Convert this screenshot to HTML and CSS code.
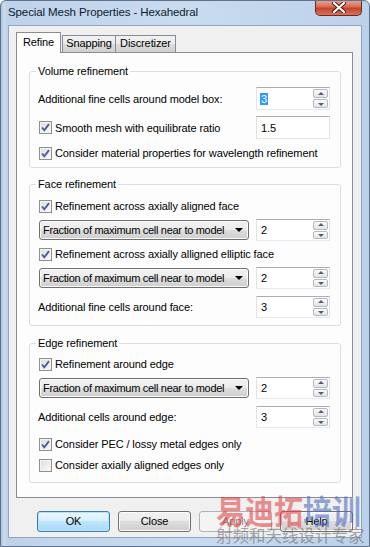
FILE: index.html
```html
<!doctype html>
<html>
  <head>
    <meta charset=utf-8>
    <title>Special Mesh Properties - Hexahedral</title>
    <link rel="stylesheet" href="styles.css">
  </head>
  <body>
    <div class=window>
      <div class=titlebar>
        <span class=title>Special Mesh Properties - Hexahedral</span>
        <div class=close>
          <svg width=14 height=11 viewBox="0 0 14 11"><path d="M2 1 L12 10 M12 1 L2 10" stroke="#4a1a12" stroke-width=4 stroke-linecap=round /><path d="M2 1 L12 10 M12 1 L2 10" stroke="#fff" stroke-width=2.2 stroke-linecap=round /></svg>
        </div>
      </div>

      <div class=client>
        <div class=tabs>
          <div class="tab active">Refine</div>
          <div class="tab snap">Snapping</div>
          <div class="tab disc">Discretizer</div>
        </div>

        <div class=panel>
          <fieldset class="group vol">
            <legend>Volume refinement</legend>
            <div class="row r23">
              <span class=label>Additional fine cells around model box:</span>
              <div class=spin><span class=sel>3</span><div class=arrows><i class=up></i><i class=down></i></div></div>
            </div>
            <div class="row r23 m6">
              <span class="check on"></span><span class=label>Smooth mesh with equilibrate ratio</span>
              <div class=spin>1.5</div>
            </div>
            <div class="row r18 m5">
              <span class="check on"></span><span class=label>Consider material properties for wavelength refinement</span>
            </div>
          </fieldset>

          <fieldset class="group face">
            <legend>Face refinement</legend>
            <div class="row r16">
              <span class="check on"></span><span class=label>Refinement across axially aligned face</span>
            </div>
            <div class="row r22 m5">
              <div class=combo>Fraction of maximum cell near to model<i class=caret></i></div>
              <div class=spin>2<div class=arrows><i class=up></i><i class=down></i></div></div>
            </div>
            <div class="row r16 m5">
              <span class="check on"></span><span class=label>Refinement across axially alligned elliptic face</span>
            </div>
            <div class="row r22 m5">
              <div class=combo>Fraction of maximum cell near to model<i class=caret></i></div>
              <div class=spin>2<div class=arrows><i class=up></i><i class=down></i></div></div>
            </div>
            <div class="row r22 m7">
              <span class=label>Additional fine cells around face:</span>
              <div class=spin>3<div class=arrows><i class=up></i><i class=down></i></div></div>
            </div>
          </fieldset>

          <fieldset class="group edge">
            <legend>Edge refinement</legend>
            <div class="row r16">
              <span class="check on"></span><span class=label>Refinement around edge</span>
            </div>
            <div class="row r22 m5">
              <div class=combo>Fraction of maximum cell near to model<i class=caret></i></div>
              <div class=spin>2<div class=arrows><i class=up></i><i class=down></i></div></div>
            </div>
            <div class="row r22 m7">
              <span class=label>Additional cells around edge:</span>
              <div class=spin>3<div class=arrows><i class=up></i><i class=down></i></div></div>
            </div>
            <div class="row r16 m8">
              <span class="check on"></span><span class=label>Consider PEC / lossy metal edges only</span>
            </div>
            <div class="row r16 m5">
              <span class=check></span><span class=label>Consider axially aligned edges only</span>
            </div>
          </fieldset>
        </div>

        <div class=buttons>
          <div class="btn default">OK</div>
          <div class=btn>Close</div>
          <div class="btn disabled">Apply</div>
          <div class=btn>Help</div>
        </div>
      </div>

      <div class=watermark>
        <div class=wm-big><span class=wm-red>易迪拓</span><span class=wm-blue>培训</span></div>
        <div class=wm-small>射频和天线设计专家</div>
      </div>
    </div>
  </body>
</html>
```

FILE: styles.css
```css
* { box-sizing: border-box }

body {
  margin: 0;
  font-family: 'Liberation Sans', Arial, sans-serif;
  font-size: 11px;
  letter-spacing: -0.1px;
  color: #000;
}

.window {
  position: relative;
  width: 370px;
  height: 547px;
  display: flex;
  flex-direction: column;
  padding: 0 7px 8px;
  border: 1px solid #5f728c;
  border-radius: 6px 6px 0 0;
  overflow: hidden;
  background:
    linear-gradient(90deg, #aac2df 0, #cddcef 3px, #bed2ea 6px, #c9dbef 50%, #bcd1ea 100%);
}

.titlebar {
  height: 24px;
  display: flex;
  justify-content: space-between;
  align-items: flex-start;
}
.title {
  margin: 5px 0 0 0;
  font-size: 11.5px;
  color: #0b1a2e;
}
.close {
  width: 47px;
  height: 16px;
  margin-top: -1px;
  border: 1px solid #6a2a20;
  border-top: none;
  border-radius: 0 0 5px 5px;
  background: linear-gradient(#e9a99a, #d56c55 45%, #c4442c 55%, #d9725a);
  display: flex;
  align-items: center;
  justify-content: center;
}

.client {
  flex: 1;
  display: flex;
  flex-direction: column;
  background: #f0f0f0;
  border: 1px solid #8fa6c4;
  padding: 6px 8px 5px 7px;
}

.tabs {
  display: flex;
  align-items: flex-end;
  height: 20px;
  position: relative;
  z-index: 1;
}
.tab {
  height: 17px;
  border: 1px solid #898c95;
  border-bottom: none;
  border-left: none;
  background: linear-gradient(#f2f2f2, #ebebeb 50%, #dddddd 50%, #cfcfcf);
  line-height: 15px;
  text-align: center;
}
.tab.active {
  width: 45px;
  height: 21px;
  margin-bottom: -1px;
  margin-right: 1px;
  border-left: 1px solid #898c95;
  background: #fdfdfd;
  line-height: 19px;
}
.tab.snap { width: 54px; border-left: 1px solid #898c95 }
.tab.disc { width: 60px }

.panel {
  flex: 1;
  border: 1px solid #898c95;
  background: #fdfdfd;
  padding: 0 11px 0 12px;
}

.group {
  min-width: 0;
  margin: 0;
  border: 1px solid #d5dfe5;
  border-radius: 3px;
  padding: 0 10px 6px 8px;
}
.group legend {
  padding: 0 2px;
  margin-left: -2px;
  line-height: 16px;
}
.vol { margin-top: 10px; padding-top: 8px; padding-bottom: 5px }
.face { margin-top: 8px; padding-top: 6px; padding-bottom: 7px }
.edge { margin-top: 9px; padding-top: 5px; padding-bottom: 9px }

.row {
  display: flex;
  align-items: center;
}
.row .label { flex: 1; white-space: nowrap }
.r16 { height: 16px }
.r18 { height: 18px }
.r22 { height: 22px }
.r23 { height: 23px }
.m5 { margin-top: 5px }
.m6 { margin-top: 6px }
.m7 { margin-top: 7px }
.m8 { margin-top: 8px }

.check {
  width: 13px;
  height: 13px;
  margin: 0 3px 0 1px;
  border: 1px solid #8e8f8f;
  background: linear-gradient(135deg, #dcdcdc, #fbfbfb);
  box-shadow: inset 0 0 0 1px #f4f4f4;
}
.check.on {
  background:
    url("data:image/svg+xml,%3Csvg xmlns='http://www.w3.org/2000/svg' width='11' height='11'%3E%3Cpath d='M2 5.5 L4.3 8.3 L9 2.2' fill='none' stroke='%234a5f95' stroke-width='1.9'/%3E%3C/svg%3E") center no-repeat,
    linear-gradient(135deg, #dcdcdc, #fbfbfb);
}

.spin {
  position: relative;
  width: 74px;
  height: 100%;
  margin-left: auto;
  border: 1px solid #abadb3;
  border-color: #abadb3 #e2e3ea #e3e9ef #e2e3ea;
  background: #fff;
  padding-left: 4px;
  display: flex;
  align-items: center;
}
.spin .sel {
  background: #3399ff;
  color: #fff;
  padding: 0 1px;
  margin-left: -1px;
}
.arrows {
  position: absolute;
  right: 1px;
  top: 1px;
  bottom: 1px;
  width: 15px;
  display: flex;
  flex-direction: column;
  gap: 1px;
}
.arrows i {
  flex: 1;
  position: relative;
  border: 1px solid #b6b9bd;
  border-radius: 2px;
  background: linear-gradient(#fbfbfb, #e4e4e4);
}
.arrows i::after {
  content: '';
  position: absolute;
  left: 50%;
  top: 50%;
  margin: -2px 0 0 -3px;
  border-left: 3px solid transparent;
  border-right: 3px solid transparent;
}
.arrows .up::after { border-bottom: 3px solid #4c607a }
.arrows .down::after { border-top: 3px solid #4c607a; margin-top: -1px }

.combo {
  position: relative;
  width: 210px;
  height: 20px;
  margin-left: 1px;
  border: 1px solid #707070;
  border-radius: 3px;
  background: linear-gradient(#f2f2f2, #ebebeb 50%, #dddddd 50%, #cfcfcf);
  box-shadow: inset 0 0 0 1px #fbfbfb;
  padding-left: 3px;
  line-height: 18px;
  letter-spacing: -0.3px;
  white-space: nowrap;
}
.caret {
  position: absolute;
  right: 5px;
  top: 7px;
  border-left: 4px solid transparent;
  border-right: 4px solid transparent;
  border-top: 4px solid #000;
}

.buttons {
  display: flex;
  justify-content: flex-end;
  gap: 8px;
  margin-top: 13px;
}
.btn {
  width: 73px;
  height: 21px;
  border: 1px solid #707070;
  border-radius: 3px;
  background: linear-gradient(#f2f2f2, #ebebeb 50%, #dddddd 50%, #cfcfcf);
  box-shadow: inset 0 0 0 1px #fbfbfb;
  text-align: center;
  line-height: 19px;
}
.btn.default {
  border-color: #3c7fb1;
  background: linear-gradient(#eaf6fd, #d9f0fc 50%, #bee6fd 50%, #a7d9f5);
  box-shadow: inset 0 0 0 1px #b8e0f6;
}
.btn.disabled {
  border-color: #adb2b5;
  background: #f4f4f4;
  box-shadow: none;
  color: #838383;
}

.watermark {
  position: absolute;
  left: 215px;
  top: 490px;
  font-family: 'Noto Sans CJK SC', sans-serif;
  letter-spacing: 0;
  white-space: nowrap;
  pointer-events: none;
}
.wm-big {
  font-size: 29px;
  font-weight: bold;
  line-height: 32px;
  transform: scaleY(1.15);
  transform-origin: top left;
}
.wm-red { color: rgba(225, 70, 72, .6) }
.wm-blue { color: rgba(80, 110, 190, .6) }
.wm-small {
  margin-top: 3px;
  font-size: 16.5px;
  line-height: 18px;
  color: rgba(110, 110, 110, .6);
}
```
